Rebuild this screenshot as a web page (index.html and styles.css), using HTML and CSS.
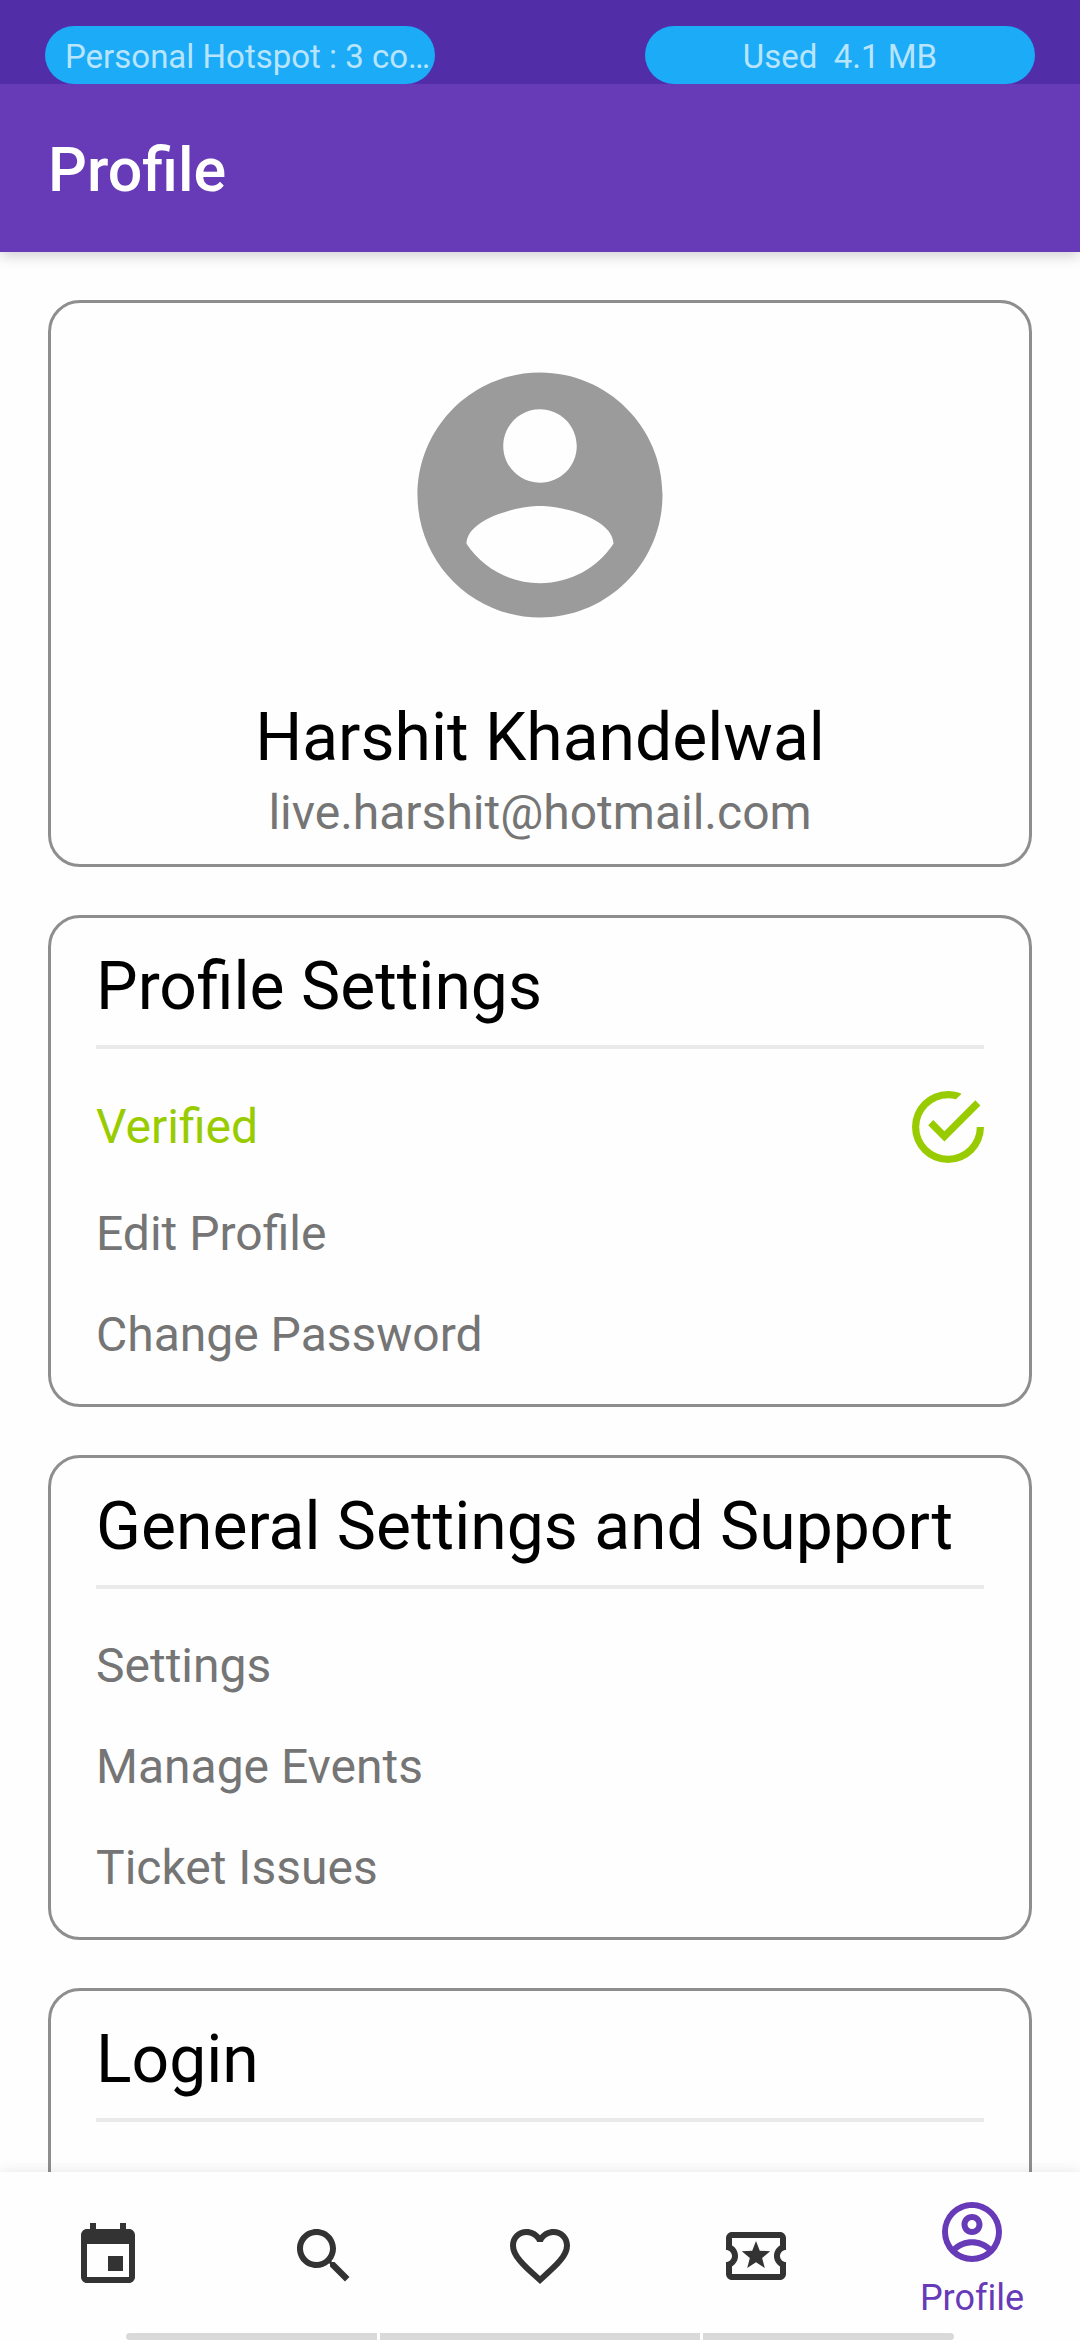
FILE: index.html
```html
<!DOCTYPE html>
<html lang="en">
<head>
<meta charset="utf-8">
<meta name="viewport" content="width=device-width, initial-scale=1">
<title>Profile</title>
<link rel="stylesheet" href="styles.css">
</head>
<body>
<div class="app">
  <div class="status-bar">
    <span class="pill pill-start">Personal Hotspot : 3 co…</span>
    <span class="pill">Used  4.1 MB</span>
  </div>
  <header class="app-bar">
    <h1 class="app-title">Profile</h1>
  </header>

  <main class="content">
    <section class="card user-card">
      <svg class="avatar" viewBox="0 0 24 24" aria-hidden="true"><path d="M12 2C6.48 2 2 6.48 2 12s4.48 10 10 10 10-4.48 10-10S17.52 2 12 2zm0 3c1.66 0 3 1.34 3 3s-1.34 3-3 3-3-1.34-3-3 1.34-3 3-3zm0 14.2c-2.5 0-4.71-1.28-6-3.22.03-1.99 4-3.08 6-3.08 1.99 0 5.97 1.09 6 3.08-1.29 1.94-3.5 3.22-6 3.22z"/></svg>
      <h2 class="card-title">Harshit Khandelwal</h2>
      <p class="email">live.harshit@hotmail.com</p>
    </section>

    <section class="card">
      <h2 class="card-title">Profile Settings</h2>
      <ul class="list">
        <li class="row verified">
          <span>Verified</span>
          <svg class="check" viewBox="2 2 20 20" aria-hidden="true"><path d="M20 12A8 8 0 0 1 12 20A8 8 0 0 1 4 12A8 8 0 0 1 12 4C12.76 4 13.5 4.11 14.2 4.31L15.77 2.74C14.61 2.26 13.34 2 12 2A10 10 0 0 0 2 12A10 10 0 0 0 12 22A10 10 0 0 0 22 12M7.91 10.08L6.5 11.5L11 16L21 6L19.59 4.58L11 13.17L7.91 10.08Z"/></svg>
        </li>
        <li class="row"><a class="link" href="#edit">Edit Profile</a></li>
        <li class="row"><a class="link" href="#password">Change Password</a></li>
      </ul>
    </section>

    <section class="card">
      <h2 class="card-title">General Settings and Support</h2>
      <ul class="list">
        <li class="row"><a class="link" href="#settings">Settings</a></li>
        <li class="row"><a class="link" href="#events">Manage Events</a></li>
        <li class="row"><a class="link" href="#tickets">Ticket Issues</a></li>
      </ul>
    </section>

    <section class="card">
      <h2 class="card-title">Login</h2>
      <ul class="list"></ul>
    </section>
  </main>

  <nav class="bottom-nav">
    <a class="tab" href="#calendar" aria-label="Calendar">
      <svg class="tab-icon" viewBox="0 0 24 24"><path d="M17 12h-5v5h5v-5zM16 1v2H8V1H6v2H5c-1.11 0-1.99.9-1.99 2L3 19c0 1.1.89 2 2 2h14c1.1 0 2-.9 2-2V5c0-1.1-.9-2-2-2h-1V1h-2zm3 18H5V8h14v11z"/></svg>
    </a>
    <a class="tab" href="#search" aria-label="Search">
      <svg class="tab-icon" viewBox="0 0 24 24"><path d="M15.5 14h-.79l-.28-.27C15.41 12.59 16 11.11 16 9.5 16 5.91 13.09 3 9.5 3S3 5.91 3 9.5 5.91 16 9.5 16c1.61 0 3.09-.59 4.23-1.57l.27.28v.79l5 4.99L20.49 19l-4.99-5zm-6 0C7.01 14 5 11.99 5 9.5S7.01 5 9.5 5 14 7.01 14 9.5 11.99 14 9.5 14z"/></svg>
    </a>
    <a class="tab" href="#favorites" aria-label="Favorites">
      <svg class="tab-icon" viewBox="0 0 24 24"><path d="M16.5 3c-1.74 0-3.41.81-4.5 2.09C10.91 3.81 9.24 3 7.5 3 4.42 3 2 5.42 2 8.5c0 3.78 3.4 6.86 8.55 11.54L12 21.35l1.45-1.32C18.6 15.36 22 12.28 22 8.5 22 5.42 19.58 3 16.5 3zm-4.4 15.55l-.1.1-.1-.1C7.14 14.24 4 11.39 4 8.5 4 6.5 5.5 5 7.5 5c1.54 0 3.04.99 3.57 2.36h1.87C13.46 5.99 14.96 5 16.5 5c2 0 3.5 1.5 3.5 3.5 0 2.89-3.14 5.74-7.9 10.05z"/></svg>
    </a>
    <a class="tab" href="#passes" aria-label="Tickets">
      <svg class="tab-icon" viewBox="0 0 24 24"><path d="M22 10V6c0-1.11-.9-2-2-2H4c-1.1 0-1.99.89-1.99 2v4c1.1 0 1.99.9 1.99 2s-.89 2-2 2v4c0 1.1.9 2 2 2h16c1.1 0 2-.9 2-2v-4c-1.1 0-2-.9-2-2s.9-2 2-2zm-2-1.46c-1.19.69-2 1.99-2 3.46s.81 2.77 2 3.46V18H4v-2.54c1.19-.69 2-1.99 2-3.46 0-1.48-.8-2.77-1.99-3.46L4 6h16v2.54zM9.07 16L12 14.12 14.93 16l-.89-3.36 2.69-2.2-3.47-.21L12 7l-1.27 3.22-3.47.21 2.69 2.2z"/></svg>
    </a>
    <a class="tab tab-active" href="#profile" aria-current="page">
      <svg class="tab-icon" viewBox="0 0 24 24" aria-hidden="true"><path d="M12 2A10 10 0 0 0 2 12A10 10 0 0 0 12 22A10 10 0 0 0 22 12A10 10 0 0 0 12 2M7.07 18.28C8.4 17.1 10.1 16.4 12 16.4C13.9 16.4 15.6 17.1 16.93 18.28C15.57 19.36 13.86 20 12 20C10.14 20 8.43 19.36 7.07 18.28M18.36 16.83C16.7 15.3 14.5 14.4 12 14.4C9.5 14.4 7.3 15.3 5.64 16.83C4.62 15.5 4 13.82 4 12C4 7.59 7.59 4 12 4C16.41 4 20 7.59 20 12C20 13.82 19.38 15.5 18.36 16.83M12 6C10.06 6 8.5 7.56 8.5 9.5C8.5 11.44 10.06 13 12 13C13.94 13 15.5 11.44 15.5 9.5C15.5 7.56 13.94 6 12 6M12 11A1.5 1.5 0 0 1 10.5 9.5A1.5 1.5 0 0 1 12 8A1.5 1.5 0 0 1 13.5 9.5A1.5 1.5 0 0 1 12 11Z"/></svg>
      <span class="tab-label">Profile</span>
    </a>
    <div class="gesture-hint" aria-hidden="true"><i></i><i></i><i></i></div>
  </nav>
</div>
</body>
</html>
```
FILE: styles.css
```css
* {
  box-sizing: border-box;
}

body {
  margin: 0;
  background: #fefefe;
  color: #000;
  font-family: Roboto, "Noto Sans", sans-serif;
}

h1, h2, p, ul {
  margin: 0;
  padding: 0;
  font-weight: 400;
}

svg {
  display: block;
  flex: none;
  fill: currentColor;
}

.app {
  display: flex;
  flex-direction: column;
  height: 100vh;
}

/* Status bar */
.status-bar {
  position: relative;
  z-index: 2;
  display: flex;
  flex: none;
  justify-content: space-between;
  padding: 26px 45px 0;
  background: linear-gradient(#512da8 50%, #512da8 50%);
}

.pill {
  width: 390px;
  padding-top: 4px;
  border-radius: 29px;
  background: #1cabf7;
  color: #b8e5fd;
  font-size: 33px;
  line-height: 54px;
  text-align: center;
  white-space: pre;
}

.pill-start {
  padding-left: 20px;
  text-align: left;
}

/* App bar */
.app-bar {
  position: relative;
  z-index: 1;
  flex: none;
  padding: 50px 48px 46px;
  background: #673ab7;
  box-shadow: 0 3px 14px rgba(0, 0, 0, 0.2);
}

.app-title {
  color: #fff;
  font-size: 61px;
  font-weight: 500;
  line-height: 72px;
}

/* Cards */
.content {
  display: flex;
  flex: 1;
  flex-direction: column;
  gap: 48px;
  min-height: 0;
  padding: 48px 48px 0;
  overflow: hidden;
}

.card {
  flex: none;
  padding: 30px 45px 39px;
  border: 3px solid #8e8e8e;
  border-radius: 32px;
}

.card-title {
  font-size: 66px;
  line-height: 77px;
}

.user-card {
  display: flex;
  flex-direction: column;
  align-items: center;
  padding: 45px 45px 23px;
}

.avatar {
  width: 294px;
  height: 294px;
  margin-bottom: 57px;
  color: #9b9b9b;
}

.email {
  margin-top: 8px;
  color: #757575;
  font-size: 48px;
  line-height: 57px;
}

.list {
  display: flex;
  flex-direction: column;
  gap: 41px;
  margin-top: 20px;
  padding-top: 47px;
  border-top: 4px solid #eaeaea;
  list-style: none;
}

.row {
  display: flex;
  align-items: center;
  justify-content: space-between;
  color: #757575;
  font-size: 48px;
  line-height: 60px;
}

.verified {
  margin-top: -5px;
  color: #9c0;
}

.check {
  width: 72px;
  height: 72px;
}

.link {
  color: inherit;
  text-decoration: none;
}

/* Bottom navigation */
.bottom-nav {
  position: relative;
  display: flex;
  flex: none;
  height: 168px;
  background: #fefefe;
  box-shadow: 0 0 14px rgba(0, 0, 0, 0.1);
}

.tab {
  display: flex;
  flex: 1;
  flex-direction: column;
  align-items: center;
  justify-content: center;
  color: #333;
  text-decoration: none;
}

.tab-active {
  justify-content: flex-start;
  padding-top: 24px;
  color: #673ab7;
}

.tab-icon {
  width: 72px;
  height: 72px;
}

.tab-label {
  margin-top: 9px;
  font-size: 36px;
  font-variant-ligatures: none;
  line-height: 42px;
}

.gesture-hint {
  position: absolute;
  right: 126px;
  bottom: 0;
  left: 126px;
  display: grid;
  grid-template-columns: 251fr 320fr 251fr;
  gap: 3px;
  height: 7px;
  overflow: hidden;
  border-radius: 4px;
}

.gesture-hint i {
  background: #d9d9d9;
}
```
